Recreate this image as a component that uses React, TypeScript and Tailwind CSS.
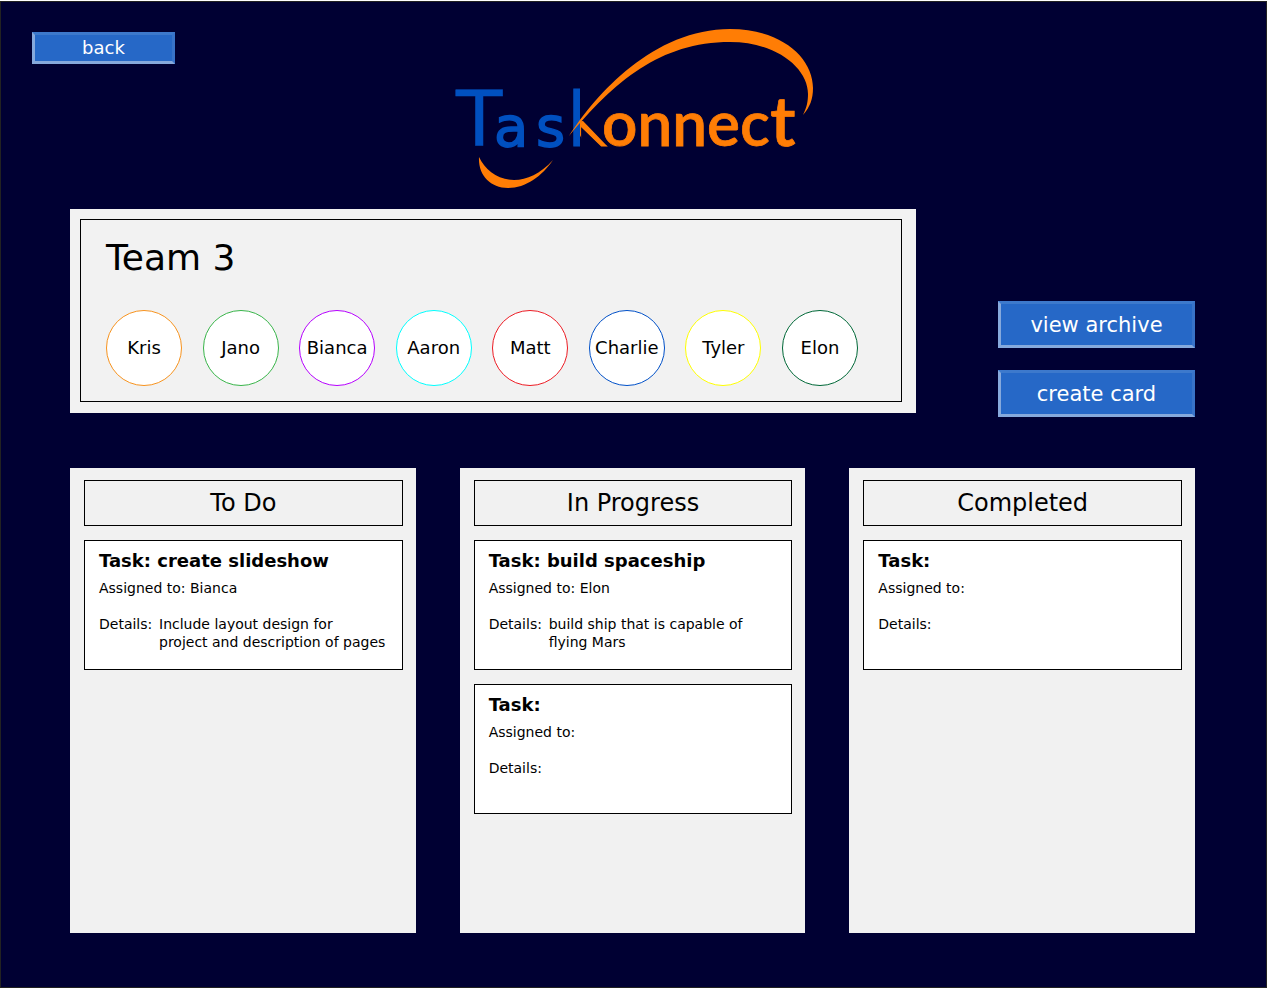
import type { ReactNode } from "react";

type Member = { name: string; ring: string };
type Task = { title?: string; assignee?: string; details?: string };
type Column = { heading: string; tasks: Task[] };

const members: Member[] = [
  { name: "Kris", ring: "border-[#f7931e]" },
  { name: "Jano", ring: "border-[#39b54a]" },
  { name: "Bianca", ring: "border-[#b600ff]" },
  { name: "Aaron", ring: "border-[#00ffff]" },
  { name: "Matt", ring: "border-[#ed1c24]" },
  { name: "Charlie", ring: "border-[#0050c8]" },
  { name: "Tyler", ring: "border-[#ffff00]" },
  { name: "Elon", ring: "border-[#006837]" },
];

const columns: Column[] = [
  {
    heading: "To Do",
    tasks: [
      {
        title: "create slideshow",
        assignee: "Bianca",
        details: "Include layout design for\nproject and description of pages",
      },
    ],
  },
  {
    heading: "In Progress",
    tasks: [
      {
        title: "build spaceship",
        assignee: "Elon",
        details: "build ship that is capable of\nflying Mars",
      },
      {},
    ],
  },
  { heading: "Completed", tasks: [{}] },
];

function BevelButton({ className, children }: { className: string; children: ReactNode }) {
  return (
    <button
      type="button"
      className={`flex cursor-pointer items-center justify-center border-[3px] border-t-[#3d79cc] border-r-[#3873c9] border-b-[#86a9dc] border-l-[#86a9dc] bg-[#2668c7] text-white ${className}`}
    >
      {children}
    </button>
  );
}

function Logo() {
  return (
    <svg viewBox="452 26 364 164" className="h-[164px] w-[364px]" role="img" aria-label="Taskonnect">
      <defs>
        <linearGradient id="k-fill" gradientUnits="userSpaceOnUse" x1="580" y1="0" x2="581" y2="0">
          <stop offset="0" stopColor="#0050c0" />
          <stop offset="0" stopColor="#ff7d05" />
        </linearGradient>
        <clipPath id="k-clip">
          <path d="M570 80H580V121H583L609 148V152H588L580 135V152H570Z" />
        </clipPath>
      </defs>
      <text y="146" fill="#0050c0" stroke="#0050c0" fontFamily="'DejaVu Sans', sans-serif">
        <tspan x="456" fontSize="76" strokeWidth="0.5">T</tspan>
        <tspan x="494" fontSize="56" strokeWidth="1.5">a</tspan>
        <tspan x="536" fontSize="56" strokeWidth="1.5">s</tspan>
      </text>
      <text
        x="567"
        y="146"
        fontSize="75"
        fill="url(#k-fill)"
        stroke="url(#k-fill)"
        clipPath="url(#k-clip)"
        fontFamily="'DejaVu Sans', sans-serif"
      >
        k
      </text>
      <text y="146" fill="#ff7d05" stroke="#ff7d05" strokeWidth="0.75" fontFamily="Lato, sans-serif" fontWeight="600">
        <tspan x="602" fontSize="62">onnec</tspan>
        <tspan x="770" fontSize="70">t</tspan>
      </text>
      <path
        fill="#ff7d05"
        d="M569 136C596 94 654 29 730 29C782 29 813 58 813 88C813 99 810 107 803 115C807 107 808 101 808 94C808 68 776 42 730 42C660 42 614 82 569 136Z"
      />
      <path
        fill="#ff7d05"
        d="M479 157C478 175 490 188 508 188C526 188 542 176 553 160C540 174 527 180 514 180C498 180 485 170 479 157Z"
      />
    </svg>
  );
}

function TaskCard({ title = "", assignee = "", details = "" }: Task) {
  return (
    <article className="min-h-[130px] border border-black bg-white px-3.5 pt-2 pb-4 text-sm/[18px]">
      <h3 className="text-lg/6 font-bold">Task: {title}</h3>
      <p className="mt-1.5">Assigned to: {assignee}</p>
      <dl className="mt-[18px] flex">
        <dt className="w-[60px] shrink-0">Details:</dt>
        <dd className="whitespace-pre-line">{details}</dd>
      </dl>
    </article>
  );
}

export default function App() {
  return (
    <div className="flex min-h-screen flex-col bg-white pt-px pr-px font-['DejaVu_Sans',sans-serif] text-black">
      <div className="grow border border-[#222222] bg-[#000033] pb-[53px]">
        <header className="grid grid-cols-[1fr_auto_1fr] pt-6">
          <div className="pt-1.5 pl-[31px]">
            <BevelButton className="h-8 w-[143px] text-lg/6">back</BevelButton>
          </div>
          <Logo />
        </header>

        <main className="mt-[19px] pr-[71px] pl-[69px]">
          <div className="flex items-end gap-[82px]">
            <section className="mb-1 grow bg-[#f2f2f2] pt-2.5 pr-3.5 pb-[11px] pl-2.5">
              <div className="border border-black pt-3.5 pr-[43px] pb-[15px] pl-[25px]">
                <h1 className="text-4xl/[48px]">Team 3</h1>
                <ul className="mt-7 flex justify-between">
                  {members.map((m) => (
                    <li
                      key={m.name}
                      className={`flex size-[76px] items-center justify-center rounded-full border bg-white text-lg/6 ${m.ring}`}
                    >
                      {m.name}
                    </li>
                  ))}
                </ul>
              </div>
            </section>
            <div className="flex w-[197px] shrink-0 flex-col gap-[22px]">
              <BevelButton className="h-[47px] w-full text-[21px]/7">view archive</BevelButton>
              <BevelButton className="h-[47px] w-full text-[21px]/7">create card</BevelButton>
            </div>
          </div>

          <div className="mt-[51px] grid grid-cols-3 gap-11">
            {columns.map((c) => (
              <section key={c.heading} className="flex min-h-[465px] flex-col gap-3.5 bg-[#f1f1f1] py-3 pr-[13px] pl-3.5">
                <h2 className="flex h-[46px] items-center justify-center border border-black text-2xl/8">{c.heading}</h2>
                {c.tasks.map((t, i) => (
                  <TaskCard key={i} {...t} />
                ))}
              </section>
            ))}
          </div>
        </main>
      </div>
    </div>
  );
}
